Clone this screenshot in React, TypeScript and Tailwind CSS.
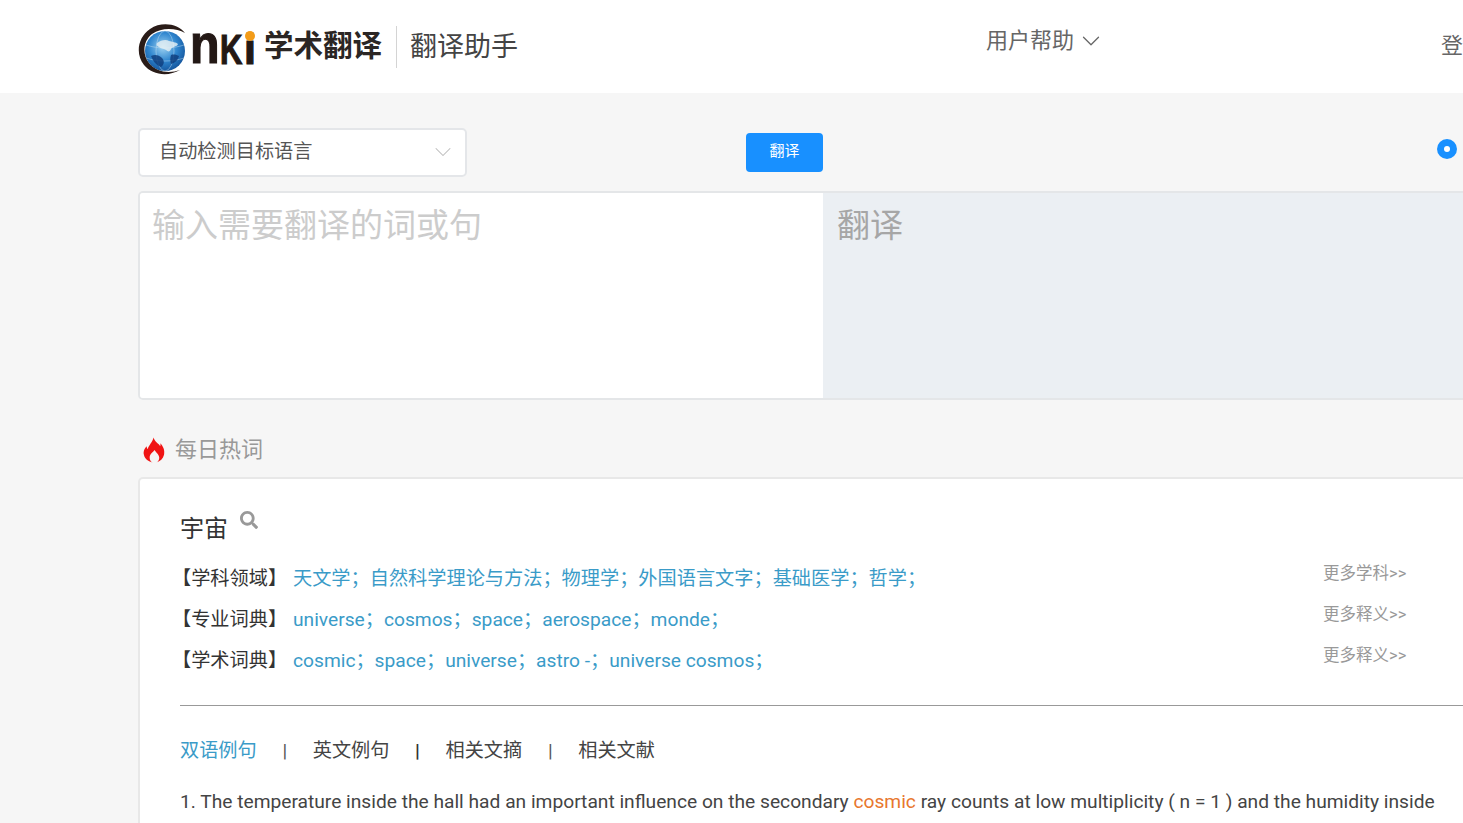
import { ChevronDown } from 'lucide-react';
import { FaSearch } from 'react-icons/fa';

const FONT = "font-['Roboto','Noto_Sans_CJK_SC',sans-serif]";

const ROWS = [
  { label: '【学科领域】', text: '天文学；自然科学理论与方法；物理学；外国语言文字；基础医学；哲学；', more: '更多学科>>' },
  { label: '【专业词典】', text: 'universe；cosmos；space；aerospace；monde；', more: '更多释义>>' },
  { label: '【学术词典】', text: 'cosmic；space；universe；astro -；universe cosmos；', more: '更多释义>>' },
];

function Globe() {
  return (
    <svg viewBox="0 0 50 52" className="w-[50px] h-[52px] shrink-0">
      <defs>
        <radialGradient id="globe" cx="45%" cy="40%" r="65%">
          <stop offset="0%" stopColor="#9fd3f2" />
          <stop offset="55%" stopColor="#2f86cf" />
          <stop offset="100%" stopColor="#124f96" />
        </radialGradient>
      </defs>
      <circle cx="27" cy="28" r="20" fill="url(#globe)" />
      <g fill="none" stroke="#cfe6f5" strokeWidth=".6" opacity=".7">
        <ellipse cx="27" cy="28" rx="9" ry="20" />
        <path d="M8 22c12 4 26 4 38 0M8 35c12 4 26 4 38 0" />
      </g>
      <path d="M19 20c4-3 9-4 12-2 3 1 7 1 9 3-1 3-5 2-7 5-1 3-3 3-5 1-3-2-5-1-7-3-2-1-3-2-2-4z" fill="#e8f1f4" opacity=".8" />
      <path d="M13 33c4-2 8-1 11 2 3 3 2 7-1 9-5-2-8-6-10-11zM33 32c3-1 6 0 8 1-1 4-4 7-8 8-1-3-1-6 0-9z" fill="#103f7f" opacity=".85" />
      <path d="M47 10C40 1 24-2 12 6 0 14-3 31 6 42c8 10 24 12 36 5-11 4-24 2-31-7C4 31 5 18 14 11c10-7 24-6 33-1z" fill="#2a1c18" />
    </svg>
  );
}

function Flame() {
  return (
    <svg viewBox="0 0 24 26" className="w-[23px] h-[26px] shrink-0 text-[#f01414]" fill="currentColor">
      <path d="M12 0c1 4 5 6 7 9 .3-1 .5-2 0-3 3 3 5 7 4 12-1 4-4 7-8 8 2-1 3-3 3-5 0-3-3-5-5-8-1 2-5 4-5 8 0 2 1 4 3 5-4-1-8-3-9-8-1-4 1-7 3-9 0 1 0 2 1 3 1-4 5-7 6-12z" />
    </svg>
  );
}

function Logo() {
  return (
    <div className="flex items-center">
      <Globe />
      <div className="relative flex items-end shrink-0 h-[32px] ml-[2px] w-[66px] font-['Liberation_Sans',sans-serif] font-bold text-[#231815] leading-none [-webkit-text-stroke:1.2px_#231815]">
        <span className="inline-block w-[30px] text-[55px] h-[32px] leading-[32px] origin-left scale-x-[.88] -translate-y-[5px]">n</span>
        <span className="inline-block w-[24px] text-[43px] h-[32px] leading-[32px] origin-left scale-x-[.72]">K</span>
        <span className="inline-block text-[43px] h-[32px] leading-[32px]">i</span>
        <span className="absolute right-[1px] -top-[2px] w-[10px] h-[10px] rounded-full bg-[#f39c19]" />
      </div>
      <span className="ml-[8px] mb-[4px] text-[29.5px] font-bold text-[#2b2624] leading-none whitespace-nowrap">学术翻译</span>
      <span className="ml-[14px] mb-[4px] w-px h-[42px] bg-[#d4d4d4]" />
      <span className="ml-[13px] mb-[4px] text-[27px] text-[#444] leading-none whitespace-nowrap">翻译助手</span>
    </div>
  );
}

export default function App() {
  return (
    <div className={`${FONT} w-[1463px] h-[823px] overflow-hidden bg-[#f6f6f6]`}>
      <header className="h-[93px] bg-white flex pl-[138px]">
        <div className="w-[848px] shrink-0 pt-[23px]"><Logo /></div>
        <div className="flex items-center shrink-0 h-[81px] text-[22px] text-[#666] whitespace-nowrap">
          用户帮助
          <ChevronDown className="ml-[2px] w-[30px] h-[30px] text-[#666]" strokeWidth={1} />
        </div>
        <div className="ml-[335px] shrink-0 h-[90px] flex items-center text-[22px] text-[#666] whitespace-nowrap">登录</div>
      </header>

      <main className="pl-[138px] w-[1700px]">
        <div className="flex items-start pt-[35px] h-[98px]">
          <div className="w-[329px] h-[49px] bg-white border-2 border-[#e4e6e9] rounded-[5px] flex items-center justify-between pl-[19px] pr-[8px] text-[19.2px] text-[#555]">
            自动检测目标语言
            <ChevronDown className="w-[28px] h-[28px] -translate-y-[1px] text-[#bbb]" strokeWidth={0.9} />
          </div>
          <button className="ml-[279px] mt-[5px] w-[77px] h-[39px] pb-[2px] bg-[#1890ff] rounded-[4px] text-white text-[15px]">翻译</button>
          <span className="ml-[614px] mt-[11px] w-[20px] h-[20px] rounded-full bg-[#1890ff] flex items-center justify-center">
            <span className="w-[6px] h-[6px] rounded-full bg-white" />
          </span>
        </div>

        <div className="flex h-[209px] border-2 border-[#e4e6e8] rounded-[5px] overflow-hidden">
          <div className="w-[683px] bg-white pl-[12px] pt-[10px] text-[33px] leading-[46px] text-[#ccc]">输入需要翻译的词或句</div>
          <div className="flex-1 bg-[#ebeff3] pl-[14px] pt-[10px] text-[33px] leading-[46px] text-[#a6a6a6]">翻译</div>
        </div>

        <div className="flex items-center h-[77px] pt-[22px] pl-[4px]">
          <Flame />
          <span className="ml-[10px] text-[22px] text-[#999]">每日热词</span>
        </div>

        <section className="bg-white border-2 border-[#e8e8e8] rounded-[5px] h-[500px] pl-[40px]">
          <div className="flex items-start pt-[32px] h-[80px]">
            <span className="text-[24px] leading-[36px] text-[#333]">宇宙</span>
            <FaSearch className="ml-[12px] w-[18px] h-[18px] text-[#999]" />
          </div>

          {ROWS.map(r => (
            <div key={r.label} className="flex items-center h-[41px] text-[19.2px] whitespace-nowrap">
              <span className="w-[121px] -ml-[8px] text-[#333]">{r.label}</span>
              <span className="w-[1030px] text-[#3a9bc8]">{r.text}</span>
              <span className="-translate-y-[5px] text-[16.5px] text-[#999]">{r.more}</span>
            </div>
          ))}

          <div className="mt-[23px] h-px bg-[#999]" />

          <div className="flex items-center h-[44px] mt-[23px] text-[19.2px] text-[#444] whitespace-nowrap">
            <span className="text-[#3a9bc8]">双语例句</span>
            <span className="w-[56px] text-center text-[#555]">|</span>
            <span>英文例句</span>
            <span className="w-[56px] text-center font-bold text-[#333]">|</span>
            <span>相关文摘</span>
            <span className="w-[56px] text-center text-[#555]">|</span>
            <span>相关文献</span>
          </div>

          <p className="mt-[15px] text-[19.2px] leading-[28px] text-[#444] whitespace-nowrap">
            1. The temperature inside the hall had an important influence on the secondary{' '}
            <span className="text-[#e8772e]">cosmic</span>{' '}
            ray counts at low multiplicity ( n = 1 ) and the humidity inside
          </p>
        </section>
      </main>
    </div>
  );
}
